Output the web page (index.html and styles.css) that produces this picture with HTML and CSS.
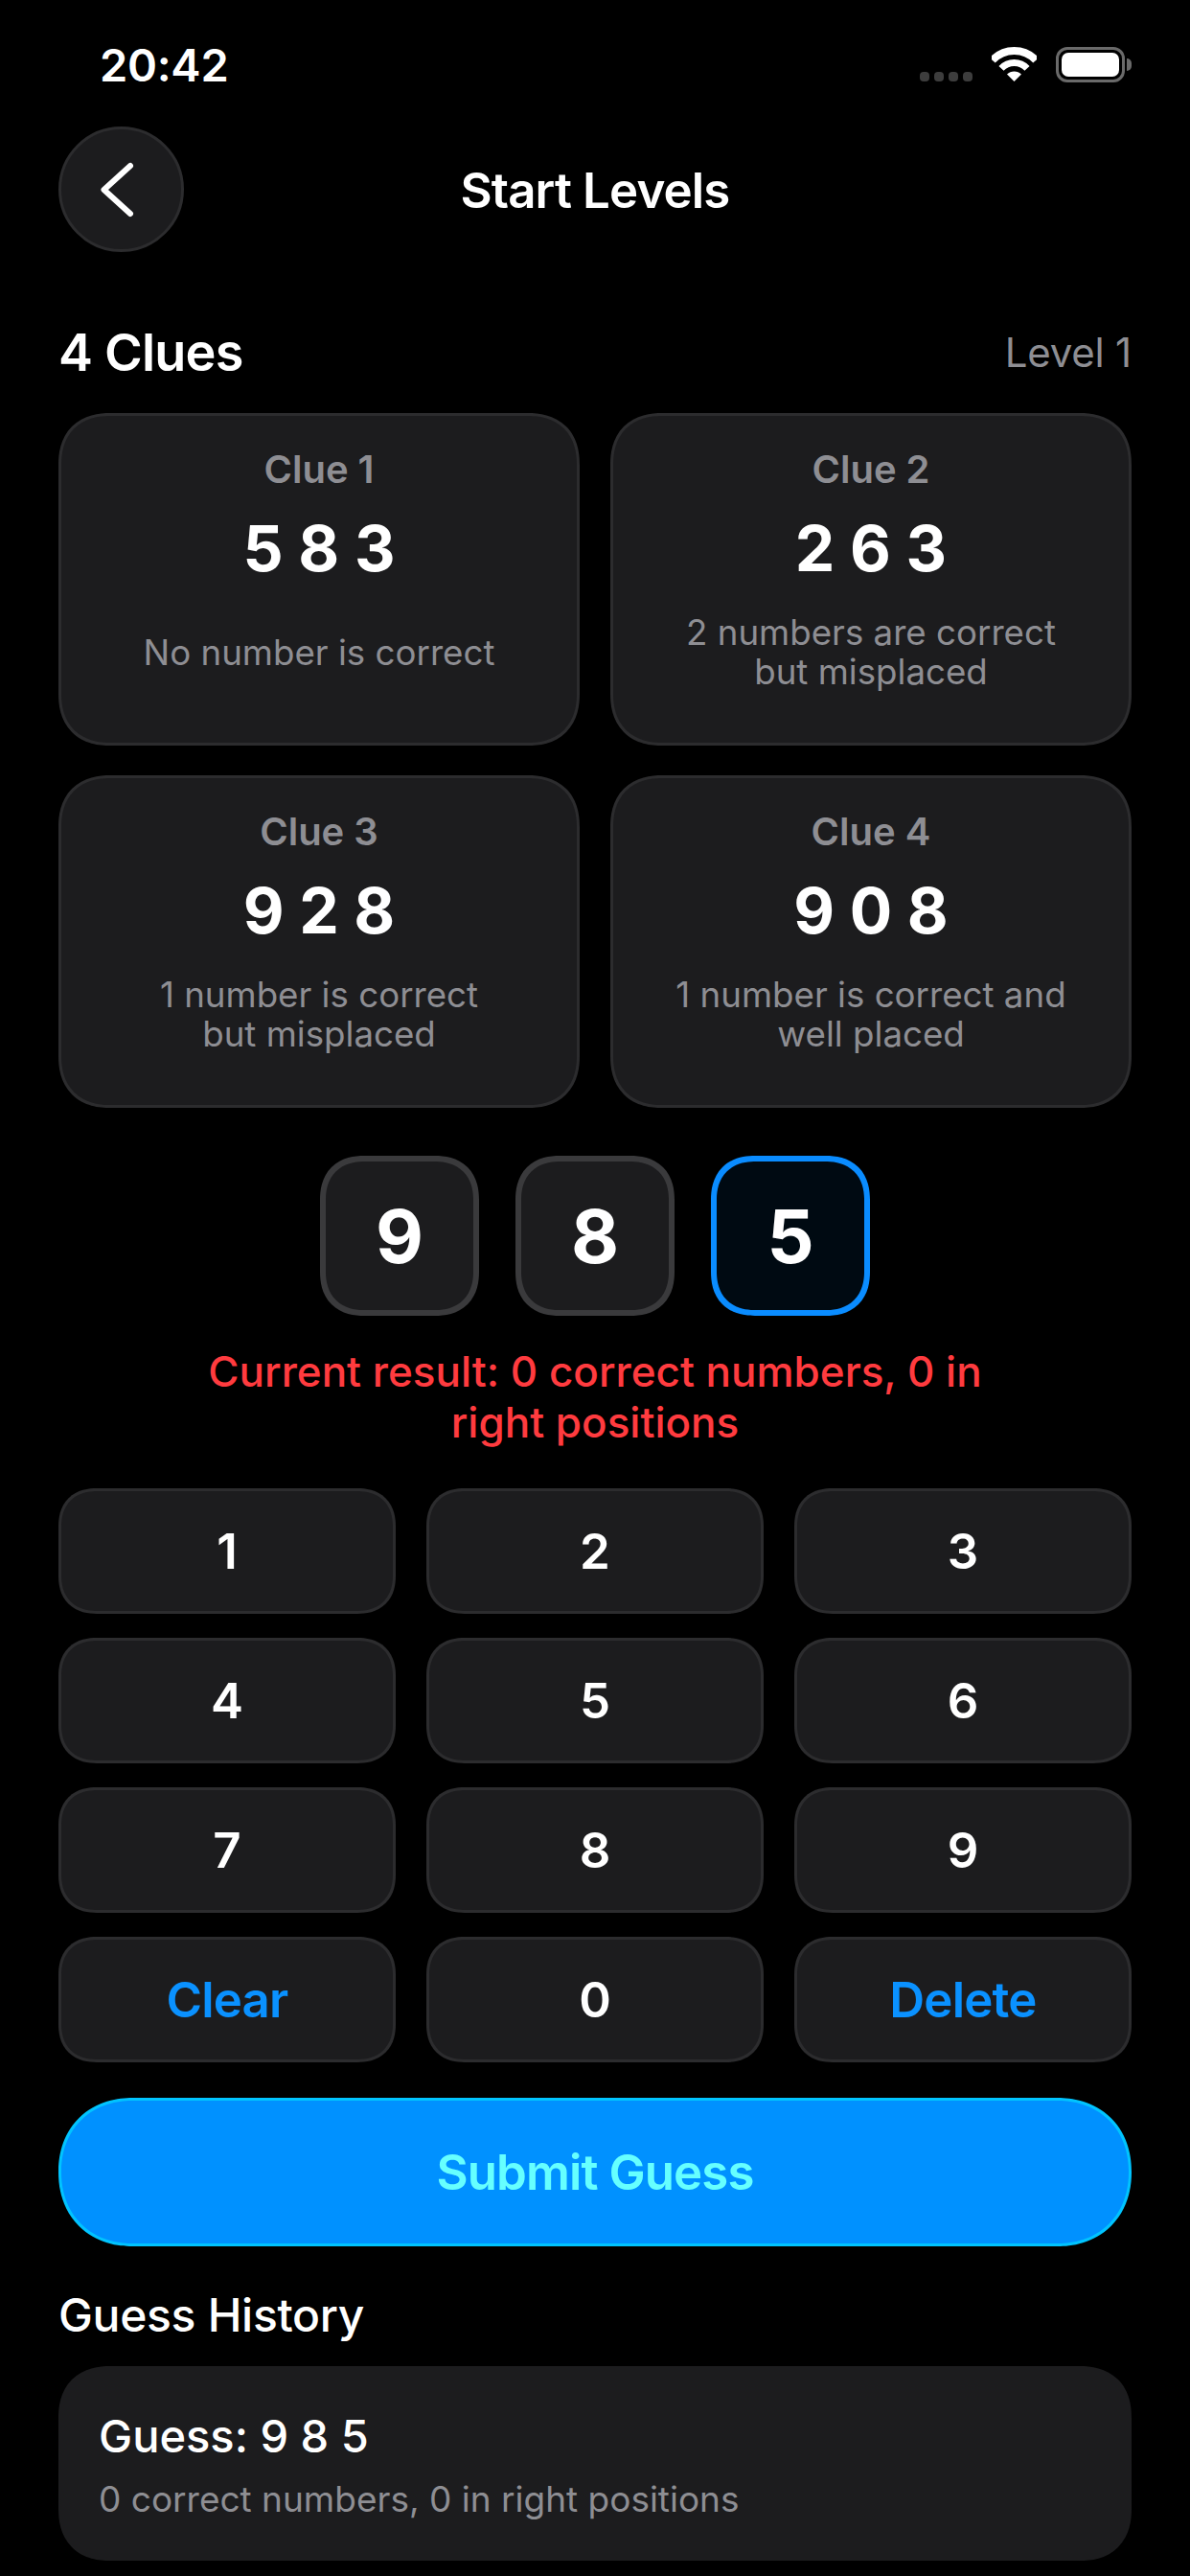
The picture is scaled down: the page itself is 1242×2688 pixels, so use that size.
FILE: index.html
```html
<!DOCTYPE html>
<html lang="en">
<head>
<meta charset="utf-8">
<title>Start Levels</title>
<link rel="stylesheet" href="styles.css">
</head>
<body>
<div class="page">
  <div class="status">
    <span class="time">20:42</span>
    <div class="status-icons">
      <div class="dots"><i></i><i></i><i></i><i></i></div>
      <svg class="wifi" width="47" height="36" viewBox="0 0 47 36"><path d="M.8 13.9A31 31 0 0 1 46.2 13.9" fill="none" stroke="#fff" stroke-width="8"/><path d="M10 22.400A18.500 18.500 0 0 1 37 22.400" fill="none" stroke="#fff" stroke-width="7"/><path d="M23.500 36L16 28.500A10.600 10.600 0 0 1 31 28.500Z" fill="#fff"/></svg>
      <div class="battery"><div class="battery-fill"></div></div>
      <div class="battery-nub"></div>
    </div>
  </div>
  <header class="nav">
    <button class="back"><svg width="40" height="62" viewBox="0 0 40 62"><path d="M34 6L6.500 31L34 56" fill="none" stroke="#fff" stroke-width="6" stroke-linecap="round" stroke-linejoin="round"/></svg></button>
    <h1 class="nav-title">Start Levels</h1>
  </header>
  <div class="section-head">
    <h2 class="clues-title">4 Clues</h2>
    <span class="level">Level 1</span>
  </div>
  <div class="clues">
    <div class="clue"><div class="clue-name">Clue 1</div><div class="clue-num">5 8 3</div><div class="clue-desc">No number is correct</div></div>
    <div class="clue"><div class="clue-name">Clue 2</div><div class="clue-num">2 6 3</div><div class="clue-desc">2 numbers are correct<br>but misplaced</div></div>
    <div class="clue"><div class="clue-name">Clue 3</div><div class="clue-num">9 2 8</div><div class="clue-desc">1 number is correct<br>but misplaced</div></div>
    <div class="clue"><div class="clue-name">Clue 4</div><div class="clue-num">9 0 8</div><div class="clue-desc">1 number is correct and<br>well placed</div></div>
  </div>
  <div class="slots">
    <div class="slot">9</div>
    <div class="slot">8</div>
    <div class="slot active">5</div>
  </div>
  <p class="result">Current result: 0 correct numbers, 0 in<br>right positions</p>
  <div class="keypad">
    <button class="key">1</button><button class="key">2</button><button class="key">3</button>
    <button class="key">4</button><button class="key">5</button><button class="key">6</button>
    <button class="key">7</button><button class="key">8</button><button class="key">9</button>
    <button class="key action">Clear</button><button class="key">0</button><button class="key action">Delete</button>
  </div>
  <button class="submit">Submit Guess</button>
  <h3 class="history-title">Guess History</h3>
  <div class="history-card">
    <div class="history-guess">Guess: 9 8 5</div>
    <div class="history-result">0 correct numbers, 0 in right positions</div>
  </div>
</div>
</body>
</html>
```
FILE: styles.css
```css
* { box-sizing: border-box; }
html, body { margin: 0; padding: 0; background: #000; }
body { font-family: Inter, "Noto Sans", sans-serif; color: #fff; width: 1242px; height: 2688px; overflow: hidden; }
button { font-family: inherit; padding: 0; margin: 0; }
h1, h2, h3, p { margin: 0; }
.page { padding: 0 61px; }

.status { height: 132px; padding: 49px 0 0 43px; display: flex; justify-content: space-between; align-items: flex-start; }
.time { font-size: 47px; font-weight: 600; line-height: 38px; letter-spacing: -0.3px; }
.status-icons { display: flex; align-items: flex-start; }
.dots { display: flex; gap: 5px; margin-top: 26px; margin-right: 20px; }
.dots i { width: 10px; height: 10px; border-radius: 4px; background: #3d3d3d; }
.wifi { margin-right: 20px; }
.battery { width: 72px; height: 37px; border: 3px solid #6a6a6a; border-radius: 12px; padding: 3px; }
.battery-fill { width: 100%; height: 100%; background: #fff; border-radius: 7px; }
.battery-nub { width: 5px; height: 13px; margin: 12px 0 0 2px; background: #6a6a6a; border-radius: 0 6px 6px 0; }

.nav { height: 131px; position: relative; display: flex; align-items: center; justify-content: center; }
.back { position: absolute; left: 0; top: 0; width: 131px; height: 131px; border-radius: 50%; background: #1c1c1e; border: 3px solid #2c2c2e; display: flex; align-items: center; justify-content: center; }
.back svg { margin-left: -4px; margin-right: 6px; }
.nav-title { font-size: 51px; font-weight: 600; line-height: 60px; letter-spacing: -0.85px; transform: translateY(1px); }

.section-head { height: 60px; margin-top: 75px; display: flex; justify-content: space-between; align-items: center; }
.clues-title { font-size: 54px; font-weight: 600; line-height: 60px; letter-spacing: -0.8px; }
.level { font-size: 42px; color: #8e8e93; line-height: 60px; letter-spacing: -0.2px; }

.clues { margin-top: 33px; display: grid; grid-template-columns: 1fr 1fr; gap: 31px 32px; }
.clue { height: 347px; background: #1c1c1e; border: 3px solid #2c2c2e; border-radius: 54px; corner-shape: superellipse(1.2); padding-top: 31px; text-align: center; }
.clue-name { font-size: 40px; font-weight: 600; line-height: 50px; color: #8e8e93; }
.clue-num { font-size: 66px; font-weight: 700; line-height: 80px; margin-top: 17px; }
.clue-desc { height: 82px; margin-top: 27px; font-size: 36.700px; line-height: 41px; color: #8e8e93; display: flex; align-items: center; justify-content: center; }

.slots { margin-top: 50px; display: flex; justify-content: center; gap: 38px; }
.slot { width: 166px; height: 167px; background: #1c1c1e; border: 6px solid #3a3a3c; border-radius: 46px; corner-shape: superellipse(1.2); display: flex; align-items: center; justify-content: center; font-size: 77px; font-weight: 700; }
.slot.active { border-color: #0a8cff; background: #000a12; }

.result { margin-top: 32px; text-align: center; color: #ff3b3f; font-size: 44px; line-height: 53px; font-weight: 500; }

.keypad { margin-top: 42px; display: grid; grid-template-columns: repeat(3, 1fr); gap: 25px 32px; }
.key { height: 131px; background: #1c1c1e; border: 3px solid #2c2c2e; border-radius: 40px; corner-shape: superellipse(1.2); color: #fff; font-size: 51px; font-weight: 600; }
.key.action { color: #0a91ff; letter-spacing: -0.8px; }

.submit { display: block; width: 100%; margin-top: 37px; height: 155px; border-radius: 77px; corner-shape: superellipse(1.1); border: 3px solid #00c4ff; background: #0091ff; color: #66ffff; font-size: 51px; font-weight: 600; letter-spacing: -0.9px; }

.history-title { margin-top: 45px; font-size: 48px; font-weight: 500; line-height: 54px; letter-spacing: -0.3px; }
.history-card { margin-top: 26px; height: 203px; background: #1c1c1e; border-radius: 54px; corner-shape: superellipse(1.2); padding: 46px 42px 0; }
.history-guess { font-size: 47px; font-weight: 500; line-height: 54px; }
.history-result { margin-top: 17px; font-size: 37px; line-height: 44px; color: #8e8e93; }
```
